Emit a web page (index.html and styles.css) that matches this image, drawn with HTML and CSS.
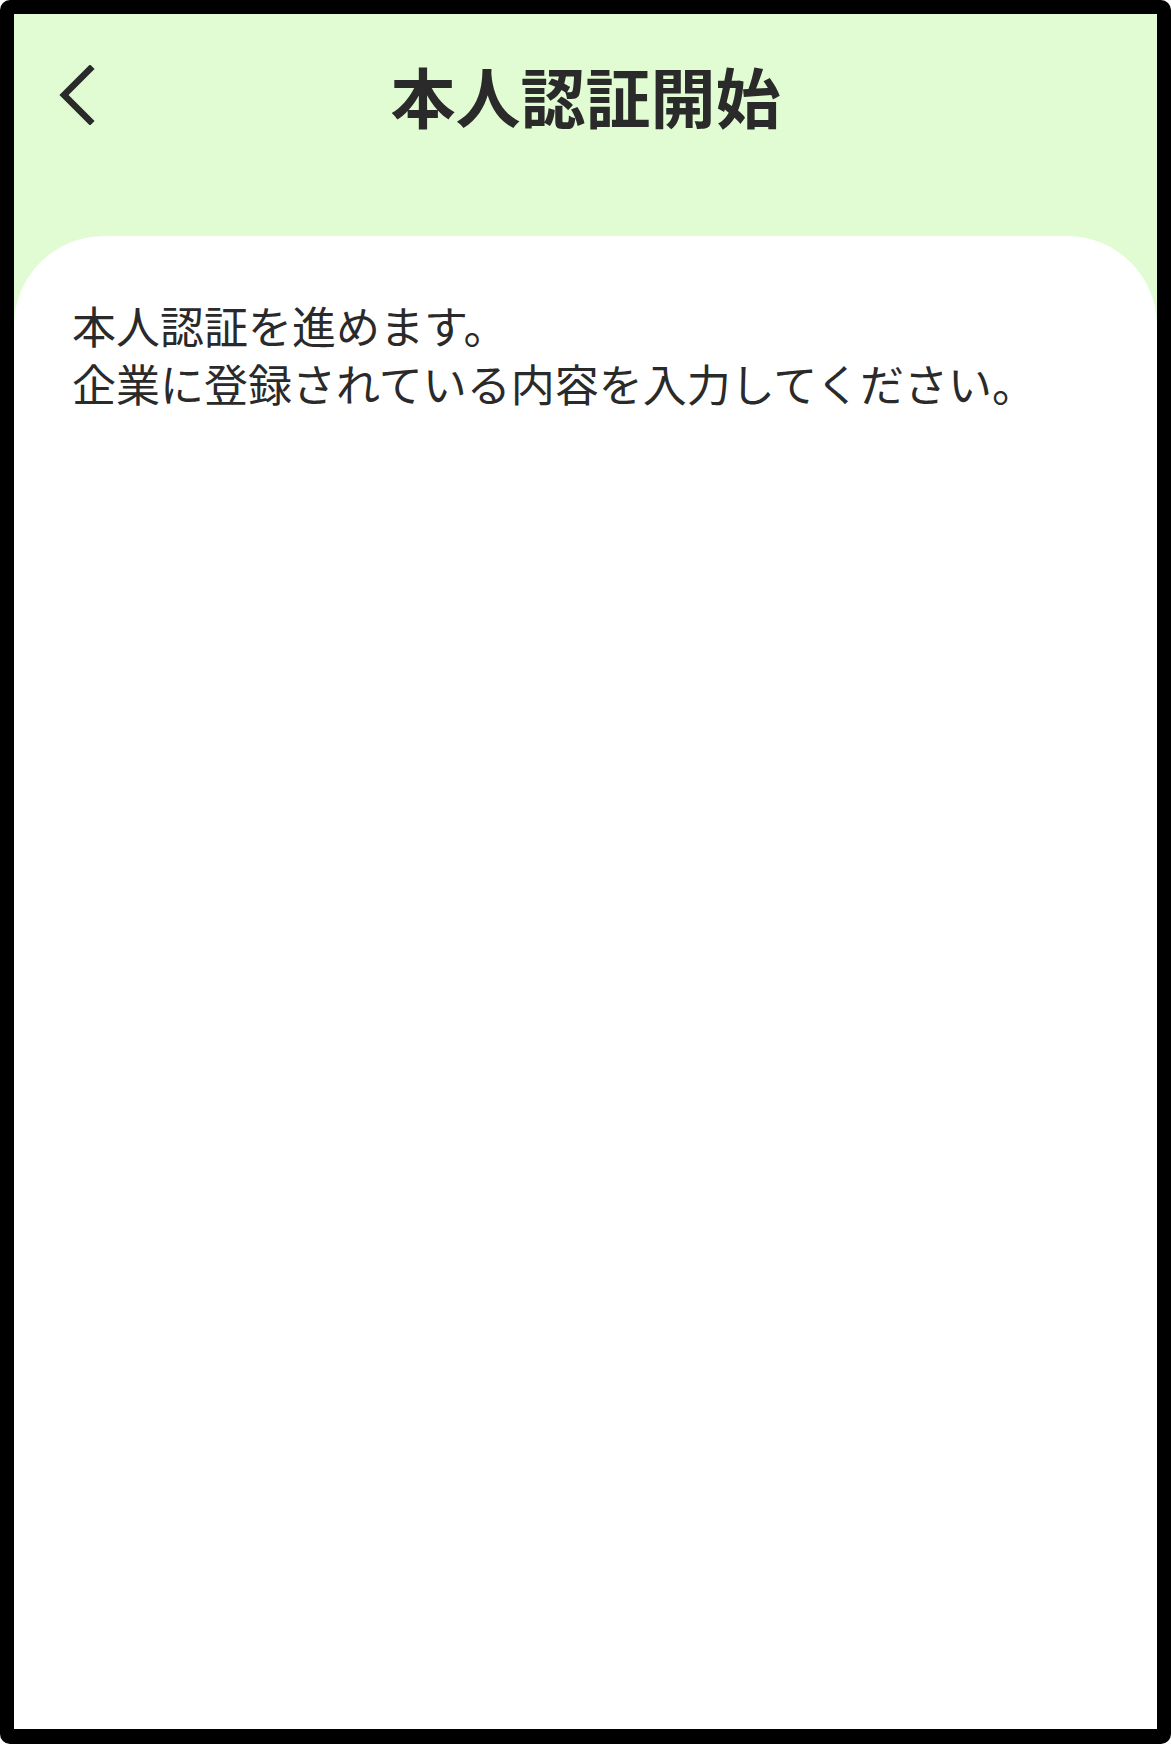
FILE: index.html
```html
<!DOCTYPE html>
<html lang="ja">
<head>
<meta charset="utf-8">
<title>本人認証開始</title>
<link rel="stylesheet" href="styles.css">
</head>
<body>
<div class="frame">
  <header class="header">
    <div class="header-row">
      <button class="back" aria-label="戻る">
        <svg width="40" height="60" viewBox="0 0 40 60" aria-hidden="true">
          <path d="M31 4 L5 30 L31 56" fill="none" stroke="#2a2a2a" stroke-width="6.5" stroke-linecap="square" stroke-linejoin="miter"/>
        </svg>
      </button>
      <h1 class="title">本人認証開始</h1>
      <div class="spacer"></div>
    </div>
  </header>
  <main class="card">
    <p class="lead">本人認証を進めます。<br>企業に登録されている内容を入力してください。</p>
  </main>
</div>
</body>
</html>
```

FILE: styles.css
```css
html, body {
  margin: 0;
  padding: 0;
  background: #ffffff;
}
body {
  font-family: "Noto Sans CJK JP", "Noto Sans", sans-serif;
  color: #2a2a2a;
}
.frame {
  box-sizing: border-box;
  width: 1171px;
  height: 1744px;
  border: 14px solid #000000;
  border-bottom-width: 15px;
  border-radius: 10px;
  background: #e1fcd3;
  overflow: hidden;
  display: flex;
  flex-direction: column;
}
.header {
  box-sizing: border-box;
  height: 222px;
  padding-top: 26px;
  flex: none;
}
.header-row {
  display: grid;
  grid-template-columns: 1fr auto 1fr;
  align-items: center;
  height: 110px;
}
.back {
  justify-self: start;
  margin-left: 45px;
  padding: 0;
  border: 0;
  background: none;
  width: 40px;
  height: 60px;
  display: flex;
  align-items: center;
  justify-content: center;
}
.back svg {
  display: block;
}
.title {
  margin: 0;
  font-size: 65px;
  font-weight: 700;
  line-height: 1;
  letter-spacing: 0;
  color: #2a2a2a;
}
.card {
  flex: 1;
  background: #ffffff;
  border-radius: 90px 90px 0 0;
  padding: 60px 58px 0 58px;
}
.lead {
  margin: 0;
  font-size: 44px;
  font-weight: 400;
  line-height: 58px;
  color: #2a2a2a;
}
```
